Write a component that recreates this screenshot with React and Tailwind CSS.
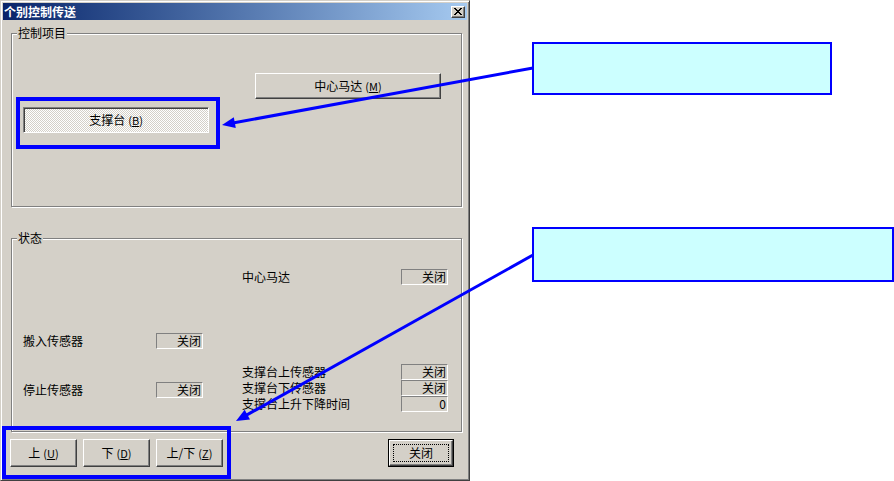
import React from 'react'

const font = { fontFamily: '"Noto Sans CJK SC", "Liberation Sans", sans-serif' }

// classic win2000 raised button
const raised =
  'border border-t-white border-l-white border-r-[#404040] border-b-[#404040] shadow-[inset_-1px_-1px_0_#808080] bg-[#d4d0c8]'

const Mn = ({ k }) => (
  <span className="ml-[3px] text-[11px]">
    (<span className="underline">{k}</span>)
  </span>
)

const Btn = ({ className = '', children }) => (
  <div className={`${raised} flex items-center justify-center text-[12px] text-black ${className}`}>
    {children}
  </div>
)

const Readout = ({ value = '关闭' }) => (
  <div className="w-[47px] h-[16px] border border-t-[#808080] border-l-[#808080] border-r-white border-b-white flex items-center justify-end pr-[1px] text-[12px] leading-none">
    {value}
  </div>
)

const Group = ({ title, className = '', children }) => (
  <div
    className={`relative border border-[#808080] shadow-[inset_1px_1px_0_#fff,1px_1px_0_#fff] ${className}`}
  >
    <span className="absolute -top-[8px] left-[5px] bg-[#d4d0c8] px-[1px] text-[12px] leading-[14px]">
      {title}
    </span>
    {children}
  </div>
)

const Arrow = ({ x1, y1, x2, y2 }) => {
  const dx = x2 - x1
  const dy = y2 - y1
  const len = Math.hypot(dx, dy)
  const ux = dx / len
  const uy = dy / len
  const hl = 13
  const hw = 5.5
  const bx = x2 - ux * hl
  const by = y2 - uy * hl
  const pts = `${x2},${y2} ${bx - uy * hw},${by + ux * hw} ${bx + uy * hw},${by - ux * hw}`
  return (
    <g>
      <line x1={x1} y1={y1} x2={bx + ux * 2} y2={by + uy * 2} stroke="#0000ff" strokeWidth="3" />
      <polygon points={pts} fill="#0000ff" />
    </g>
  )
}

export default function App() {
  return (
    <div className="relative w-[894px] h-[481px] bg-white flex overflow-hidden text-black" style={font}>
      {/* dialog window */}
      <div className="w-[470px] h-[481px] shrink-0 bg-[#d4d0c8] border border-t-[#d4d0c8] border-l-[#d4d0c8] border-r-[#404040] border-b-[#404040] shadow-[inset_1px_1px_0_#fff,inset_-1px_-1px_0_#808080] p-[2px] flex flex-col">
        {/* title bar */}
        <div className="h-[17px] flex items-center justify-between bg-gradient-to-r from-[#0a246a] to-[#a6caf0]">
          <span className="pl-[1px] text-white font-bold text-[12px] leading-none">个别控制传送</span>
          <div className={`${raised} w-[14px] h-[12px] mr-[2px] flex items-center justify-center`}>
            <svg width="8" height="7" viewBox="0 0 8 7">
              <path d="M0 0h2v1h1v1h2V1h1V0h2v1H7v1H6v1H5v1h1v1h1v1h1v1H6V6H5V5H3v1H2v1H0V6h1V5h1V4h1V3H2V2H1V1H0z" fill="#000" />
            </svg>
          </div>
        </div>

        {/* 控制项目 */}
        <Group title="控制项目" className="ml-[8px] mt-[13px] w-[451px] h-[174px] flex flex-col">
          <Btn className="ml-[243px] mt-[39px] w-[186px] h-[26px]">
            中心马达<Mn k="M" />
          </Btn>
          <div className="ml-[11px] mt-[8px] w-[186px] h-[26px] border border-t-[#808080] border-l-[#808080] border-r-white border-b-white shadow-[inset_1px_1px_0_#404040] bg-[repeating-conic-gradient(#ffffff_0_25%,#d4d0c8_0_50%)] bg-[length:2px_2px] flex items-center justify-center text-[12px]">
            支撑台<Mn k="B" />
          </div>
        </Group>

        {/* 状态 */}
        <Group title="状态" className="ml-[8px] mt-[31px] w-[451px] h-[194px] flex text-[12px]">
          <div className="w-[230px] flex flex-col pl-[11px]">
            <div className="mt-[94px] h-[16px] flex items-center">
              <span className="w-[133px]">搬入传感器</span>
              <Readout />
            </div>
            <div className="mt-[33px] h-[16px] flex items-center">
              <span className="w-[133px]">停止传感器</span>
              <Readout />
            </div>
          </div>
          <div className="flex flex-col">
            <div className="mt-[30px] h-[16px] flex items-center">
              <span className="w-[159px]">中心马达</span>
              <Readout />
            </div>
            <div className="mt-[79px] h-[16px] flex items-center">
              <span className="w-[159px]">支撑台上传感器</span>
              <Readout />
            </div>
            <div className="h-[16px] flex items-center">
              <span className="w-[159px]">支撑台下传感器</span>
              <Readout />
            </div>
            <div className="h-[16px] flex items-center">
              <span className="w-[159px]">支撑台上升下降时间</span>
              <Readout value="0" />
            </div>
          </div>
        </Group>

        {/* bottom buttons */}
        <div className="mt-[7px] flex items-center pl-[7px] pr-[13px]">
          <div className="flex gap-[6px]">
            <Btn className="w-[67px] h-[28px]">
              上<Mn k="U" />
            </Btn>
            <Btn className="w-[67px] h-[28px]">
              下<Mn k="D" />
            </Btn>
            <Btn className="w-[67px] h-[28px]">
              上/下<Mn k="Z" />
            </Btn>
          </div>
          <div className="ml-auto w-[66px] h-[28px] border border-black flex">
            <div className={`${raised} flex-1 p-[3px] flex`}>
              <div className="flex-1 border border-dotted border-black flex items-center justify-center text-[12px]">
                关闭
              </div>
            </div>
          </div>
        </div>
      </div>

      {/* callouts */}
      <div className="flex flex-col ml-[62px]">
        <div className="mt-[42px] w-[300px] h-[53px] border-2 border-[#0000ff] bg-[#ccffff]" />
        <div className="mt-[132px] w-[362px] h-[55px] border-2 border-[#0000ff] bg-[#ccffff]" />
      </div>

      {/* annotation overlay */}
      <svg className="absolute inset-0 pointer-events-none" width="894" height="481">
        <rect x="18" y="99" width="200" height="48" fill="none" stroke="#0000ff" strokeWidth="4" />
        <rect x="4" y="428" width="225" height="49" fill="none" stroke="#0000ff" strokeWidth="4" />
        <Arrow x1={533} y1={68} x2={222} y2={125} />
        <Arrow x1={533} y1={255} x2={236} y2={421} />
      </svg>
    </div>
  )
}
